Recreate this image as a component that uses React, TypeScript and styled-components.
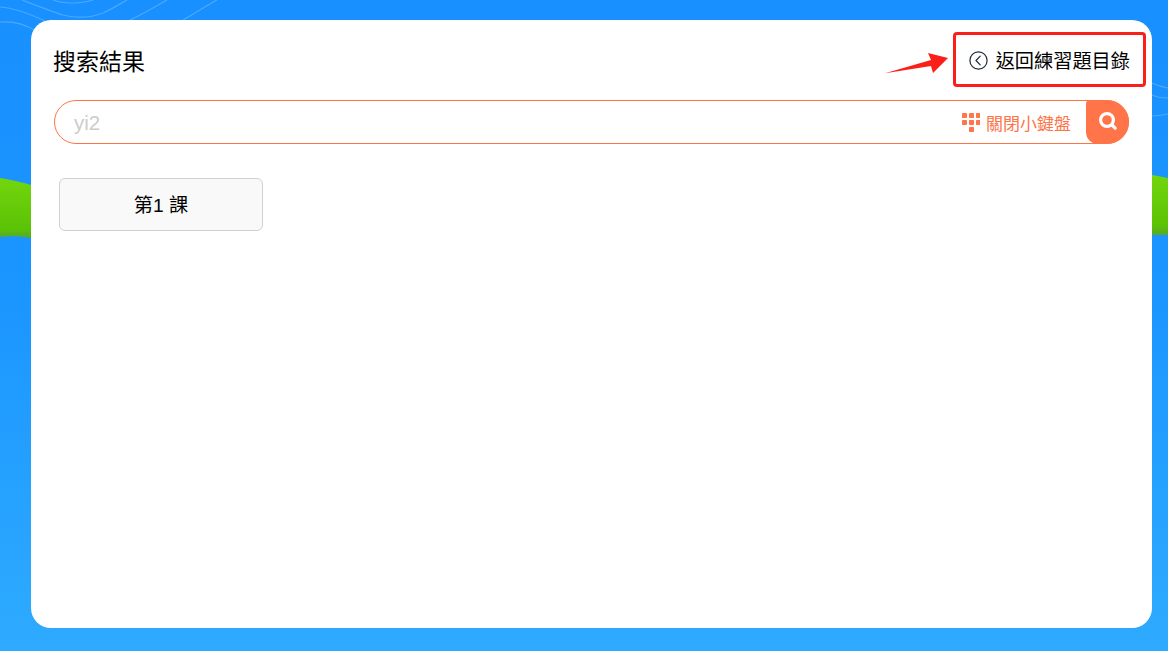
import React from "react";
import styled, { createGlobalStyle } from "styled-components";

const GlobalStyle = createGlobalStyle`
  html, body {
    margin: 0;
    padding: 0;
    height: 100%;
  }
  body {
    font-family: "Liberation Sans", "Noto Sans CJK TC", sans-serif;
    overflow: hidden;
  }
`;

const Page = styled.div`
  position: relative;
  box-sizing: border-box;
  width: 1168px;
  height: 651px;
  padding: 20px 16px 23px 31px;
  background: linear-gradient(180deg, #1890ff 0%, #1b95ff 45%, #2eabff 100%);
  overflow: hidden;
`;

const Backdrop = styled.svg`
  position: absolute;
  left: 0;
  top: 0;
`;

const Card = styled.main`
  position: relative;
  box-sizing: border-box;
  height: 100%;
  padding: 0 23px;
  background: #fff;
  border-radius: 20px;
`;

const TopRow = styled.header`
  display: flex;
  align-items: center;
  justify-content: space-between;
  height: 80px;
`;

const Title = styled.h1`
  margin: 0 0 0 -1px;
  font-size: 23px;
  font-weight: 400;
  color: #000;
`;

const BackLink = styled.a`
  display: flex;
  align-items: center;
  gap: 8px;
  margin: 0 -1px 0 0;
  font-size: 19.2px;
  color: #000;
  cursor: pointer;
`;

const Callout = styled.div`
  position: absolute;
  left: 922px;
  top: 12px;
  width: 193px;
  height: 55px;
  box-sizing: border-box;
  border: 3px solid #fb1f1a;
  border-radius: 4px;
`;

const CalloutArrow = styled.svg`
  position: absolute;
  left: 854px;
  top: 32px;
`;

const SearchBar = styled.div`
  display: flex;
  align-items: center;
  box-sizing: border-box;
  width: 1075px;
  height: 44px;
  border: 1px solid #ff7448;
  border-radius: 22px;
`;

const SearchInput = styled.input`
  flex: 1;
  min-width: 0;
  height: 100%;
  padding: 2px 0 0 19px;
  box-sizing: border-box;
  border: 0;
  outline: 0;
  background: transparent;
  font-family: inherit;
  font-size: 20.5px;
  color: #ccc;
`;

const KeyboardToggle = styled.span`
  display: flex;
  align-items: center;
  gap: 6px;
  margin-right: 15px;
  font-size: 17px;
  color: #ff7448;
`;

const SearchButton = styled.button`
  display: flex;
  align-items: center;
  justify-content: center;
  box-sizing: border-box;
  width: 43px;
  height: 44px;
  margin: -1px -1px -1px 0;
  padding: 0 0 2px;
  border: 0;
  border-radius: 4px 22px 22px 12px;
  background: #ff7448;
`;

const Lessons = styled.section`
  display: flex;
  flex-wrap: wrap;
  padding: 34px 0 0 5px;
`;

const LessonButton = styled.button`
  width: 204px;
  height: 53px;
  padding: 0 0 1px;
  border: 1px solid #d0d0d0;
  border-radius: 6px;
  background: #f9f9f9;
  font-family: inherit;
  font-size: 19.2px;
  color: #000;
`;

const keypadDots = [
  [0, 0], [7, 0], [14, 0],
  [0, 7], [7, 7], [14, 7],
  [7, 14],
];

export default function App() {
  return (
    <Page>
      <GlobalStyle />
      <Backdrop width="1168" height="651" viewBox="0 0 1168 651">
        <defs>
          <linearGradient id="hillL" x1="0" y1="0" x2="0" y2="1">
            <stop offset="0" stopColor="#72d60e" />
            <stop offset="0.85" stopColor="#5cc205" />
            <stop offset="1" stopColor="#54a82c" />
          </linearGradient>
        </defs>
        <path d="M0 178 C12 180 22 182 31 185 L31 238 C20 236 10 236 0 237 Z" fill="url(#hillL)" />
        <path d="M1152 175 C1158 176 1163 177 1168 178 L1168 235 L1152 235 Z" fill="url(#hillL)" />
        <g fill="none" stroke="#fff" strokeOpacity="0.22" strokeWidth="1.2">
          <path d="M22 0 C35 5 50 11 63 15 C75 18 90 18 103 13 C112 9 120 4 127 0" />
          <path d="M0 7 C15 8 30 14 45 21" />
          <path d="M0 22 C12 21 25 24 36 31" />
          <path d="M53 0 C62 4 82 4 93 0" />
          <path d="M130 20 C143 14 155 7 167 0" />
          <path d="M183 20 C195 13 206 6 217 0" />
          <path d="M1152 83 C1156 85 1162 87 1168 88" />
          <path d="M1152 95 C1156 97 1162 98 1168 98" />
          <path d="M1152 116 C1158 116 1163 115 1168 114" />
        </g>
      </Backdrop>
      <Card>
        <TopRow>
          <Title>搜索結果</Title>
          <BackLink>
            <svg width="19" height="19" viewBox="0 0 19 19" fill="none" stroke="#1f2a3a" strokeWidth="1.2">
              <circle cx="9.5" cy="9.5" r="8.6" />
              <path d="M11.2 5.2 L7 9.5 L11.2 13.8" strokeLinecap="round" strokeLinejoin="round" />
            </svg>
            返回練習題目錄
          </BackLink>
        </TopRow>
        <SearchBar>
          <SearchInput defaultValue="yi2" />
          <KeyboardToggle>
            <svg width="18" height="19" viewBox="0 0 18 19" fill="#ff7448">
              {keypadDots.map(([x, y]) => (
                <rect key={`${x}-${y}`} x={x} y={y} width="5" height="5" rx="0.8" />
              ))}
            </svg>
            關閉小鍵盤
          </KeyboardToggle>
          <SearchButton aria-label="search">
            <svg width="20" height="20" viewBox="0 0 20 20" fill="none" stroke="#fff">
              <circle cx="9" cy="9" r="6.4" strokeWidth="3.2" />
              <path d="M14 14 L17.2 17.2" strokeWidth="3.2" strokeLinecap="round" />
            </svg>
          </SearchButton>
        </SearchBar>
        <Lessons>
          <LessonButton>第1 課</LessonButton>
        </Lessons>
        <Callout />
        <CalloutArrow width="66" height="24" viewBox="0 0 66 24">
          <path d="M-1 21.5 L46 8 L43 1 L63 6 L48 21 L46 14 Z" fill="#fb1f1a" />
        </CalloutArrow>
      </Card>
    </Page>
  );
}
